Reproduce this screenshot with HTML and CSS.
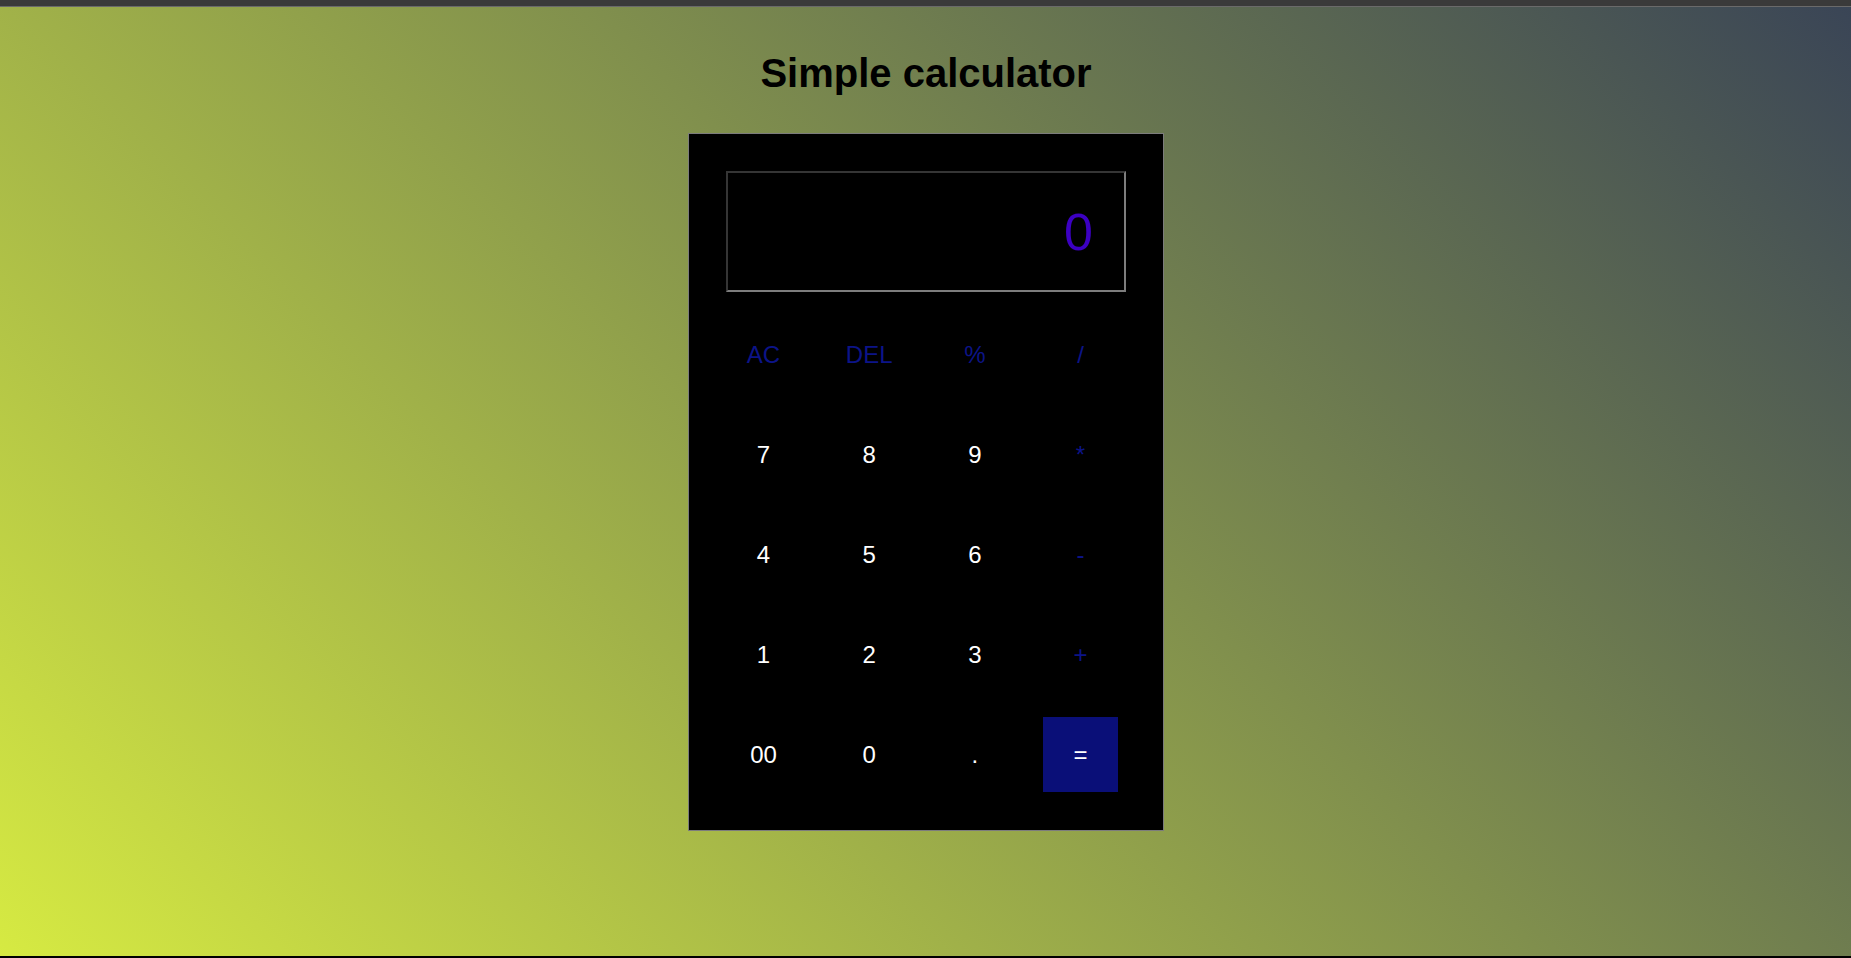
FILE: index.html
```html
<!DOCTYPE html>
<html lang="en">
<head>
<meta charset="utf-8">
<title>Simple calculator</title>
<link rel="stylesheet" href="styles.css">
</head>
<body>
<div class="topbar"></div>
<main class="page">
  <h1 class="title">Simple calculator</h1>
  <div class="calc">
    <div class="display">0</div>
    <div class="keys">
      <button class="key op">AC</button>
      <button class="key op">DEL</button>
      <button class="key op">%</button>
      <button class="key op">/</button>
      <button class="key">7</button>
      <button class="key">8</button>
      <button class="key">9</button>
      <button class="key op">*</button>
      <button class="key">4</button>
      <button class="key">5</button>
      <button class="key">6</button>
      <button class="key op">-</button>
      <button class="key">1</button>
      <button class="key">2</button>
      <button class="key">3</button>
      <button class="key op">+</button>
      <button class="key">00</button>
      <button class="key">0</button>
      <button class="key">.</button>
      <button class="key equal">=</button>
    </div>
  </div>
</main>
<div class="bottombar"></div>
</body>
</html>
```

FILE: styles.css
```css
html, body {
  margin: 0;
  padding: 0;
}
body {
  background: #000;
  font-family: "Liberation Sans", Arial, sans-serif;
  height: 958px;
  overflow: hidden;
}
.topbar {
  height: 6px;
  background: #3a3a3a;
  border-bottom: 1px solid #6a6a6a;
}
.page {
  height: 949px;
  box-sizing: border-box;
  padding-left: 1px;
  background: linear-gradient(45deg, #d6ea42 0%, #3a4556 100%);
  display: flex;
  flex-direction: column;
  align-items: center;
}
.title {
  margin: 43px 0 0;
  font-size: 40px;
  line-height: 46px;
  font-weight: bold;
  color: #000;
}
.calc {
  margin-top: 37px;
  width: 476px;
  box-sizing: border-box;
  background: #000;
  border: 1px solid #7c7c7c;
  padding: 37px 37px 38px;
}
.display {
  width: 400px;
  height: 121px;
  box-sizing: border-box;
  border: 2px solid;
  border-color: #353535 #7d7d7d #7d7d7d #353535;
  display: flex;
  align-items: center;
  justify-content: flex-end;
  padding-right: 31px;
  font-size: 52px;
  color: #3c00c2;
}
.keys {
  margin-top: 25px;
  display: grid;
  grid-template-columns: repeat(4, 75px);
  grid-auto-rows: 75px;
  column-gap: 30.67px;
  row-gap: 25px;
}
.key {
  width: 75px;
  height: 75px;
  border: none;
  padding: 0;
  background: #000;
  color: #fff;
  font-family: "Liberation Sans", Arial, sans-serif;
  font-size: 24px;
  display: flex;
  align-items: center;
  justify-content: center;
}
.key.op {
  color: #0c1488;
}
.key.equal {
  background: #0a0f78;
  color: #fff;
}
.bottombar {
  height: 2px;
  background: #000;
}
```
